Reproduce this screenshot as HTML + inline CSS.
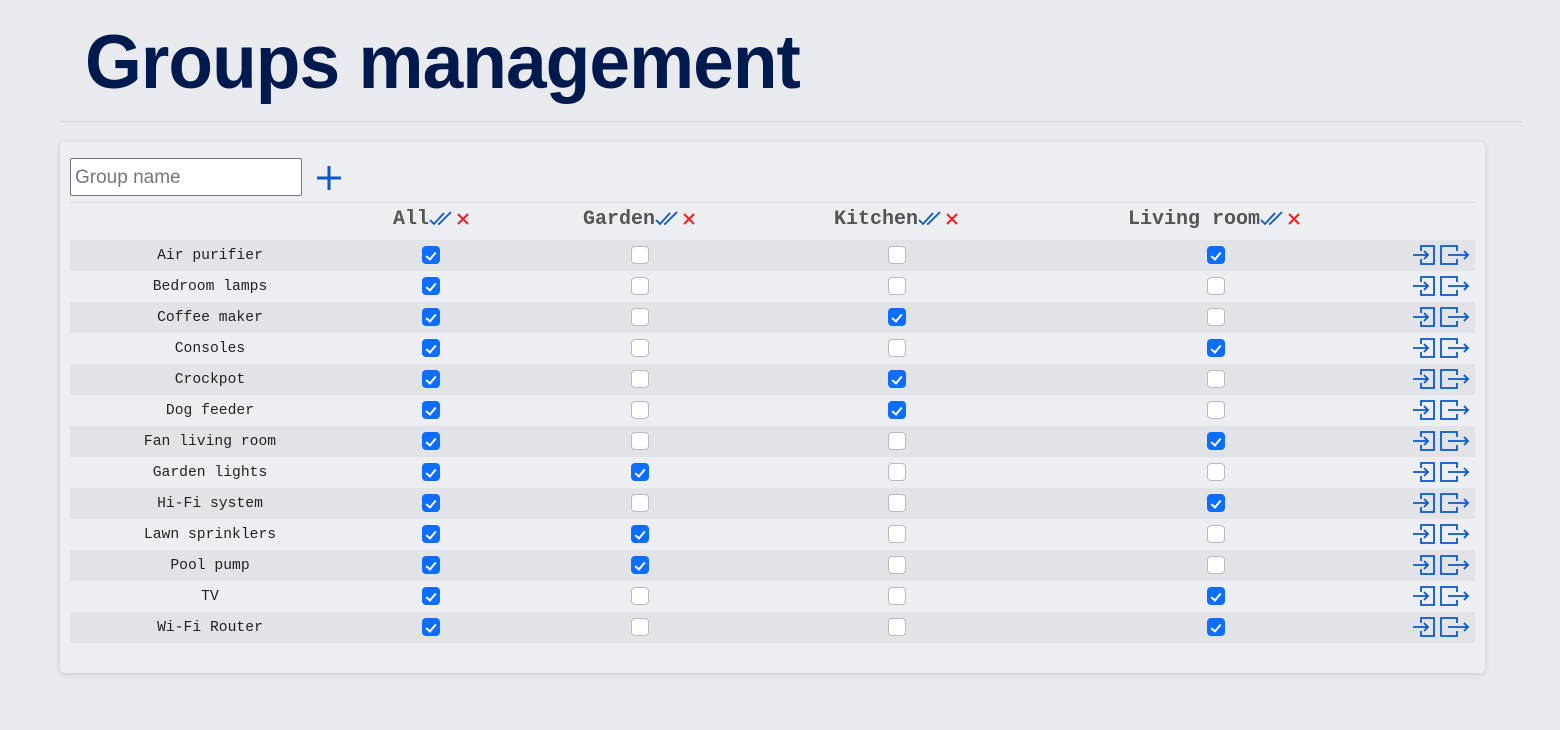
<!DOCTYPE html>
<html><head><style>
body{margin:0;width:1560px;height:730px;background:#e8eaee;position:relative;overflow:hidden;font-family:"Liberation Sans",sans-serif}
h1{position:absolute;left:85px;top:18px;margin:0;font-size:76px;font-weight:bold;color:#001a4d;letter-spacing:-1px;line-height:90px;transform:scaleX(0.962);transform-origin:0 0;white-space:nowrap}
.hr{position:absolute;left:60px;top:121px;width:1462px;height:1px;background:#d2d4d8}
.card{position:absolute;left:60px;top:142px;width:1425px;height:531px;background:#eceef2;border-radius:5px;box-shadow:0 1px 6px rgba(0,0,0,.15)}
.inp{position:absolute;left:70px;top:158px;border:1px solid #767676;border-radius:2px;background:#fff;font-size:19px;color:#777;line-height:38px;padding-left:4px;box-sizing:border-box;width:232px;height:38px}
.plus{position:absolute;left:316px;top:165px}
.sep{position:absolute;left:70px;top:202px;width:1405px;height:1px;background:#dcdee2}
.hd{position:absolute;top:207px;font-family:"Liberation Mono",monospace;font-weight:bold;font-size:20px;color:#555;line-height:26px;white-space:nowrap}
.hd svg{vertical-align:middle}
.row{position:absolute;left:70px;width:1405px;height:31px}
.row.o{background:#e2e3e7}
.lbl{position:absolute;left:0;top:1px;width:280px;text-align:center;font-family:"Liberation Mono",monospace;font-size:14.7px;color:#222;line-height:31px}
.cb{position:absolute;top:6px;width:18px;height:18px;border-radius:4px;box-sizing:border-box;background:#fff;border:1px solid #b8bbc0}
.cb.c{background:#0d6efd;border-color:#0d6efd}
.cb.c:after{content:"";position:absolute;left:5px;top:2.5px;width:4px;height:8px;border:solid #fff;border-width:0 2.5px 2.5px 0;transform:rotate(40deg)}
.ic{position:absolute;left:1342px;top:3px}
</style></head><body>
<h1>Groups management</h1>
<div class="hr"></div>
<div class="card"></div>
<div class="inp">Group name</div>
<svg class="plus" width="26" height="26" viewBox="0 0 26 26"><path d="M13 1V25M1 13H25" stroke="#0a58ca" stroke-width="3"/></svg>
<div class="sep"></div>
<div class="hd" style="left:393px">All<svg width="24" height="16" viewBox="0 0 24 16"><path d="M1 9l4 4 10-11M9 13l1 0 12-12" stroke="#0a58ca" stroke-width="1.8" fill="none"/></svg><svg width="18" height="14" viewBox="0 0 18 14"><path d="M5 2L15 12M15 2L5 12" stroke="#f02020" stroke-width="2"/></svg></div>
<div class="hd" style="left:583px">Garden<svg width="24" height="16" viewBox="0 0 24 16"><path d="M1 9l4 4 10-11M9 13l1 0 12-12" stroke="#0a58ca" stroke-width="1.8" fill="none"/></svg><svg width="18" height="14" viewBox="0 0 18 14"><path d="M5 2L15 12M15 2L5 12" stroke="#f02020" stroke-width="2"/></svg></div>
<div class="hd" style="left:834px">Kitchen<svg width="24" height="16" viewBox="0 0 24 16"><path d="M1 9l4 4 10-11M9 13l1 0 12-12" stroke="#0a58ca" stroke-width="1.8" fill="none"/></svg><svg width="18" height="14" viewBox="0 0 18 14"><path d="M5 2L15 12M15 2L5 12" stroke="#f02020" stroke-width="2"/></svg></div>
<div class="hd" style="left:1128px">Living room<svg width="24" height="16" viewBox="0 0 24 16"><path d="M1 9l4 4 10-11M9 13l1 0 12-12" stroke="#0a58ca" stroke-width="1.8" fill="none"/></svg><svg width="18" height="14" viewBox="0 0 18 14"><path d="M5 2L15 12M15 2L5 12" stroke="#f02020" stroke-width="2"/></svg></div>

<svg width="0" height="0" style="position:absolute"><defs><g id="io"><path d="M9 8V3H22V21H9V16M1 12H16M12 8l4 4-4 4" stroke="#0a58ca" stroke-width="1.8" fill="none"/><path d="M45 8V3H29V21H45V16M36 12H56M52 8l4 4-4 4" stroke="#0a58ca" stroke-width="1.8" fill="none"/></g></defs></svg>

<div class="row o" style="top:240px"><div class="lbl">Air purifier</div><div class="cb c" style="left:352px"></div><div class="cb" style="left:561px"></div><div class="cb" style="left:818px"></div><div class="cb c" style="left:1137px"></div><svg class="ic" width="58" height="24"><use href="#io"/></svg></div>
<div class="row" style="top:271px"><div class="lbl">Bedroom lamps</div><div class="cb c" style="left:352px"></div><div class="cb" style="left:561px"></div><div class="cb" style="left:818px"></div><div class="cb" style="left:1137px"></div><svg class="ic" width="58" height="24"><use href="#io"/></svg></div>
<div class="row o" style="top:302px"><div class="lbl">Coffee maker</div><div class="cb c" style="left:352px"></div><div class="cb" style="left:561px"></div><div class="cb c" style="left:818px"></div><div class="cb" style="left:1137px"></div><svg class="ic" width="58" height="24"><use href="#io"/></svg></div>
<div class="row" style="top:333px"><div class="lbl">Consoles</div><div class="cb c" style="left:352px"></div><div class="cb" style="left:561px"></div><div class="cb" style="left:818px"></div><div class="cb c" style="left:1137px"></div><svg class="ic" width="58" height="24"><use href="#io"/></svg></div>
<div class="row o" style="top:364px"><div class="lbl">Crockpot</div><div class="cb c" style="left:352px"></div><div class="cb" style="left:561px"></div><div class="cb c" style="left:818px"></div><div class="cb" style="left:1137px"></div><svg class="ic" width="58" height="24"><use href="#io"/></svg></div>
<div class="row" style="top:395px"><div class="lbl">Dog feeder</div><div class="cb c" style="left:352px"></div><div class="cb" style="left:561px"></div><div class="cb c" style="left:818px"></div><div class="cb" style="left:1137px"></div><svg class="ic" width="58" height="24"><use href="#io"/></svg></div>
<div class="row o" style="top:426px"><div class="lbl">Fan living room</div><div class="cb c" style="left:352px"></div><div class="cb" style="left:561px"></div><div class="cb" style="left:818px"></div><div class="cb c" style="left:1137px"></div><svg class="ic" width="58" height="24"><use href="#io"/></svg></div>
<div class="row" style="top:457px"><div class="lbl">Garden lights</div><div class="cb c" style="left:352px"></div><div class="cb c" style="left:561px"></div><div class="cb" style="left:818px"></div><div class="cb" style="left:1137px"></div><svg class="ic" width="58" height="24"><use href="#io"/></svg></div>
<div class="row o" style="top:488px"><div class="lbl">Hi-Fi system</div><div class="cb c" style="left:352px"></div><div class="cb" style="left:561px"></div><div class="cb" style="left:818px"></div><div class="cb c" style="left:1137px"></div><svg class="ic" width="58" height="24"><use href="#io"/></svg></div>
<div class="row" style="top:519px"><div class="lbl">Lawn sprinklers</div><div class="cb c" style="left:352px"></div><div class="cb c" style="left:561px"></div><div class="cb" style="left:818px"></div><div class="cb" style="left:1137px"></div><svg class="ic" width="58" height="24"><use href="#io"/></svg></div>
<div class="row o" style="top:550px"><div class="lbl">Pool pump</div><div class="cb c" style="left:352px"></div><div class="cb c" style="left:561px"></div><div class="cb" style="left:818px"></div><div class="cb" style="left:1137px"></div><svg class="ic" width="58" height="24"><use href="#io"/></svg></div>
<div class="row" style="top:581px"><div class="lbl">TV</div><div class="cb c" style="left:352px"></div><div class="cb" style="left:561px"></div><div class="cb" style="left:818px"></div><div class="cb c" style="left:1137px"></div><svg class="ic" width="58" height="24"><use href="#io"/></svg></div>
<div class="row o" style="top:612px"><div class="lbl">Wi-Fi Router</div><div class="cb c" style="left:352px"></div><div class="cb" style="left:561px"></div><div class="cb" style="left:818px"></div><div class="cb c" style="left:1137px"></div><svg class="ic" width="58" height="24"><use href="#io"/></svg></div>
</body></html>
